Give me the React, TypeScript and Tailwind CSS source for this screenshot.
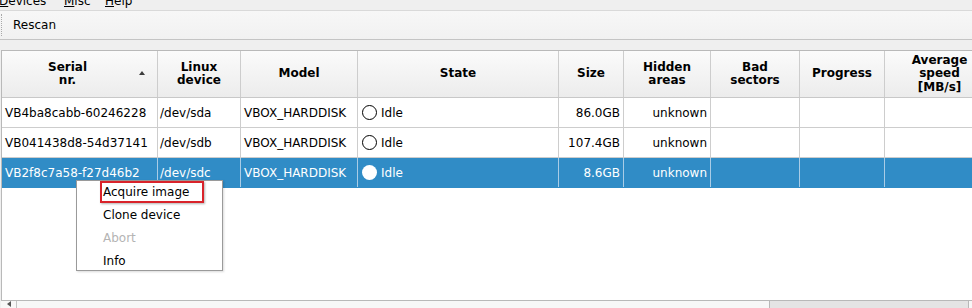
import { Fragment } from "react";

interface Column {
  title: string[];
  width: string;
  align: string;
}

const columns: Column[] = [
  { title: ["Serial", "nr."], width: "w-[156px]", align: "justify-start pl-[3px]" },
  { title: ["Linux", "device"], width: "w-[83px]", align: "justify-start pl-[2px]" },
  { title: ["Model"], width: "w-[117px]", align: "justify-start pl-[3px]" },
  { title: ["State"], width: "w-[201px]", align: "justify-start pl-[4px]" },
  { title: ["Size"], width: "w-[65px]", align: "justify-end pr-[3px]" },
  { title: ["Hidden", "areas"], width: "w-[87px]", align: "justify-end pr-[3px]" },
  { title: ["Bad", "sectors"], width: "w-[89px]", align: "justify-start" },
  { title: ["Progress"], width: "w-[85px]", align: "justify-start" },
  { title: ["Average", "speed", "[MB/s]"], width: "w-[110px]", align: "justify-start" },
];

const rows = [
  { serial: "VB4ba8cabb-60246228", dev: "/dev/sda", model: "VBOX_HARDDISK", state: "Idle", size: "86.0GB", hidden: "unknown" },
  { serial: "VB041438d8-54d37141", dev: "/dev/sdb", model: "VBOX_HARDDISK", state: "Idle", size: "107.4GB", hidden: "unknown" },
  { serial: "VB2f8c7a58-f27d46b2", dev: "/dev/sdc", model: "VBOX_HARDDISK", state: "Idle", size: "8.6GB", hidden: "unknown", selected: true },
];

const StateDot = ({ filled }: { filled?: boolean }) => (
  <span
    className={`inline-block w-[15px] h-[15px] rounded-full mr-[4px] shrink-0 ${
      filled ? "bg-white" : "bg-white border border-black"
    }`}
  />
);

const App = () => {
  return (
    <div className="relative w-[972px] h-[308px] overflow-hidden bg-[#efefef] font-['DejaVu_Sans',sans-serif] text-[12px] text-black flex flex-col">
      {/* menu bar, scrolled half out of view */}
      <div className="h-[11px] shrink-0 border-b border-[#d9d9d9] overflow-hidden">
        <div className="flex -mt-[6px] leading-[14px] -ml-[1px]">
          <span className="w-[65px]"><span className="underline">D</span>evices</span>
          <span className="w-[41px]"><span className="underline">M</span>isc</span>
          <span><span className="underline">H</span>elp</span>
        </div>
      </div>

      {/* toolbar */}
      <div className="h-[29px] shrink-0 bg-gradient-to-b from-[#f7f7f7] to-[#f1f1f1] border-b border-[#c4c4c4] flex items-center">
        <div className="w-[3px] h-[22px] ml-px border-l border-dotted border-[#a9a9a9]" />
        <span className="ml-[9px]">Rescan</span>
      </div>

      <div className="h-[10px] shrink-0" />

      {/* table */}
      <div className="flex-1 ml-px border-l border-t border-[#b9b9b9] bg-white flex flex-col min-h-0">
        <div className="flex h-[47px] shrink-0 border-b border-[#c8c8c8] bg-gradient-to-b from-[#fbfbfb] to-[#ececec] font-bold leading-[13.5px]">
          {columns.map((col, i) => (
            <div
              key={i}
              className={`${col.width} shrink-0 border-r border-[#cdcdcd] flex items-center ${
                i === 0 ? "pr-[24px] relative" : ""
              }`}
            >
              <div className="flex-1 flex flex-col items-center text-center">
                {col.title.map((t) => (
                  <span key={t}>{t}</span>
                ))}
              </div>
              {i === 0 && (
                <span className="absolute left-[137px] top-[20px] w-0 h-0 border-l-[3.5px] border-r-[3.5px] border-b-[4px] border-l-transparent border-r-transparent border-b-[#3c3c3c]" />
              )}
            </div>
          ))}
        </div>

        {rows.map((r) => {
          const cells = [r.serial, r.dev, r.model, r.state, r.size, r.hidden, "", "", ""];
          return (
            <div
              key={r.serial}
              className={`flex h-[30px] shrink-0 border-b ${
                r.selected ? "bg-[#308cc6] text-white border-[#308cc6]" : "border-[#cdcdcd]"
              }`}
            >
              {cells.map((c, i) => (
                <div
                  key={i}
                  className={`${columns[i].width} ${columns[i].align} shrink-0 border-r flex items-center whitespace-nowrap overflow-hidden ${
                    r.selected ? "border-[#a9cce6]" : "border-[#cdcdcd]"
                  }`}
                >
                  {i === 3 ? (
                    <Fragment>
                      <StateDot filled={r.selected} />
                      <span>{c}</span>
                    </Fragment>
                  ) : (
                    c
                  )}
                </div>
              ))}
            </div>
          );
        })}

        <div className="flex-1" />

        {/* horizontal scrollbar */}
        <div className="h-[8px] shrink-0 border-t border-[#b8b8b8] bg-[#f7f7f7] flex -ml-px">
          <div className="w-[16px] border-r border-[#c4c4c4] flex items-end justify-center">
            <span className="w-0 h-0 border-t-[3px] border-b-[3px] border-r-[4px] border-t-transparent border-b-transparent border-r-[#555] mb-px" />
          </div>
          <div className="w-[752px]" />
          <div className="w-[200px] bg-[#e4e4e4] border-l border-r border-[#b8b8b8]" />
        </div>
      </div>

      {/* context menu */}
      <div className="absolute left-[76px] top-[180px] w-[147px] h-[91px] bg-white border border-[#9a9a9a] shadow-[1px_1px_2px_rgba(0,0,0,0.15)] flex flex-col">
        <div className="h-[23px] -mt-px shrink-0 flex items-center pl-[26px]">Acquire image</div>
        <div className="h-[23px] shrink-0 flex items-center pl-[26px]">Clone device</div>
        <div className="h-[23px] shrink-0 flex items-center pl-[26px] text-[#b4b4b4]">Abort</div>
        <div className="h-[23px] shrink-0 flex items-center pl-[26px]">Info</div>
      </div>
      <div className="absolute left-[100px] top-[181px] w-[104px] h-[22px] border-2 border-[#d9232a] shadow-[1px_1px_2px_rgba(0,0,0,0.3)]" />
    </div>
  );
};

export default App;
